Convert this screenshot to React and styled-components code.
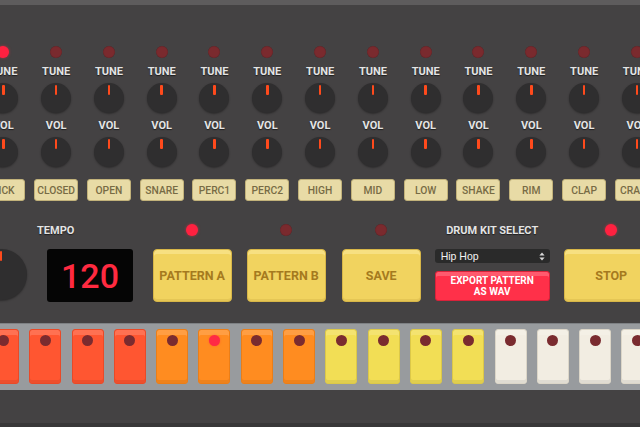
import React from 'react';
import styled, { createGlobalStyle } from 'styled-components';

const GlobalStyle = createGlobalStyle`
  html, body {
    margin: 0;
    padding: 0;
    background: #444243;
    overflow: hidden;
    font-family: Roboto, "Liberation Sans", Arial, sans-serif;
  }
`;

const Machine = styled.div`
  width: 640px;
  height: 427px;
  display: flex;
  flex-direction: column;
  background: #444243;
  overflow: hidden;
`;

const TopBar = styled.div`
  height: 5px;
  background: #5e5c5d;
  flex-shrink: 0;
`;

const ChannelRow = styled.div`
  display: flex;
  margin-left: -23.1px;
  padding-top: 40.7px;
`;

const Channel = styled.div`
  width: 52.8px;
  flex-shrink: 0;
  display: flex;
  flex-direction: column;
  align-items: center;
`;

const Led = styled.div`
  width: ${p => p.$size || 12}px;
  height: ${p => p.$size || 12}px;
  border-radius: 50%;
  background: ${p => (p.$on ? '#ff2140' : '#7a2a2e')};
  box-shadow: ${p => (p.$on ? '0 0 3px rgba(255,40,60,0.6)' : 'inset 0 0 1px rgba(0,0,0,0.4)')};
  flex-shrink: 0;
`;

const KnobLabel = styled.div`
  height: 13px;
  line-height: 13px;
  margin-top: ${p => p.$mt}px;
  font-size: 11px;
  font-weight: 700;
  color: #e4e4e4;
  text-shadow: 0 1px 1px #1e1e1e;
`;

const Knob = styled.div`
  position: relative;
  width: ${p => p.$size}px;
  height: ${p => p.$size}px;
  margin-top: ${p => p.$mt || 0}px;
  border-radius: 50%;
  background: #2f2e2f;
  box-shadow: 0 1px 2px rgba(0, 0, 0, 0.35);
  flex-shrink: 0;

  &::after {
    content: '';
    position: absolute;
    left: 50%;
    top: 2px;
    width: 2.5px;
    height: 10px;
    margin-left: -1.25px;
    background: #ff4a1c;
    border-radius: 1px;
  }
`;

const ChannelButton = styled.div`
  margin-top: 12px;
  width: 44px;
  height: 22px;
  box-sizing: border-box;
  display: flex;
  align-items: center;
  justify-content: center;
  background: #e8dba6;
  border: 1px solid #c2b27a;
  border-radius: 3px;
  font-size: 10.3px;
  font-weight: 500;
  color: #776b45;
  white-space: nowrap;
`;

const ControlRow = styled.div`
  display: flex;
  margin-top: 21px;
  margin-left: -24.5px;
`;

const Group = styled.div`
  display: flex;
  flex-direction: column;
  align-items: ${p => p.$align || 'center'};
  margin-left: ${p => p.$ml || 0}px;
  flex-shrink: 0;
`;

const Header = styled.div`
  height: 16px;
  display: flex;
  align-items: center;
  justify-content: center;
  padding-left: ${p => p.$pl || 0}px;
  margin-bottom: 11px;
  font-size: 11px;
  font-weight: 700;
  color: #e4e4e4;
  text-shadow: 0 1px 1px #1e1e1e;
  white-space: nowrap;
`;

const TempoBody = styled.div`
  display: flex;
  align-items: flex-start;
  gap: 20.5px;
`;

const Display = styled.div`
  width: 86px;
  height: 53px;
  background: #050505;
  border-radius: 3px;
  display: flex;
  align-items: center;
  justify-content: center;
  color: #ff2a40;
  font-size: 34px;
  font-weight: 500;
`;

const PadButton = styled.div`
  width: ${p => p.$w || 79}px;
  height: 53px;
  box-sizing: border-box;
  display: flex;
  align-items: center;
  justify-content: center;
  background: #f1d35f;
  border: 1px solid #d7b648;
  border-radius: 4px;
  box-shadow: inset 0 4px 0 rgba(255, 240, 170, 0.45), inset 0 -2px 0 rgba(150, 110, 20, 0.12);
  font-size: 12.5px;
  font-weight: 700;
  color: #a57a1e;
  white-space: nowrap;
`;

const KitColumn = styled.div`
  width: 115px;
  display: flex;
  flex-direction: column;
  gap: 7.5px;
`;

const Select = styled.div`
  height: 14px;
  box-sizing: border-box;
  padding: 0 5px 0 6px;
  display: flex;
  align-items: center;
  justify-content: space-between;
  background: #2a2a2a;
  border-radius: 3px;
  font-family: "Liberation Sans", Arial, sans-serif;
  font-size: 10.5px;
  color: #f2f2f2;
`;

const ExportButton = styled.div`
  height: 30px;
  box-sizing: border-box;
  display: flex;
  flex-direction: column;
  align-items: center;
  justify-content: center;
  background: #ff3049;
  border: 1px solid #d9223a;
  border-radius: 3px;
  box-shadow: inset 0 4px 0 rgba(255, 170, 180, 0.35);
  font-size: 10px;
  line-height: 11px;
  font-weight: 700;
  color: #ffffff;
  text-align: center;
`;

const SeqStrip = styled.div`
  margin-top: 20.7px;
  height: 67.3px;
  box-sizing: border-box;
  padding-top: 5.5px;
  background: #989b9e;
  border-top: 1px solid #7e8184;
  display: flex;
  gap: 10.3px;
  margin-left: -13px;
`;

const padColors = {
  red: { bg: '#ff5631', border: '#e94a28' },
  orange: { bg: '#ff8c20', border: '#ea7e18' },
  yellow: { bg: '#f2de55', border: '#dcc848' },
  cream: { bg: '#f2ede2', border: '#dcd6c8' },
};

const Step = styled.div`
  width: 32px;
  height: 55px;
  box-sizing: border-box;
  flex-shrink: 0;
  display: flex;
  justify-content: center;
  padding-top: 4.5px;
  border-radius: 3px;
  background: ${p => padColors[p.$color].bg};
  border: 1px solid ${p => padColors[p.$color].border};
  box-shadow: inset 0 5px 0 rgba(255, 255, 255, 0.16), inset 0 -3px 0 rgba(0, 0, 0, 0.07);
`;

const StepLed = styled(Led)`
  background: ${p => (p.$on ? '#ff2a45' : '#7a2b2f')};
  box-shadow: ${p => (p.$on ? '0 0 2px rgba(255,40,60,0.5)' : 'none')};
`;

const Footer = styled.div`
  flex: 1;
`;

const BottomEdge = styled.div`
  height: 4px;
  background: #383738;
`;

const channels = ['KICK', 'CLOSED', 'OPEN', 'SNARE', 'PERC1', 'PERC2', 'HIGH', 'MID', 'LOW', 'SHAKE', 'RIM', 'CLAP', 'CRASH'];

const steps = [
  'red', 'red', 'red', 'red',
  'orange', 'orange', 'orange', 'orange',
  'yellow', 'yellow', 'yellow', 'yellow',
  'cream', 'cream', 'cream', 'cream',
];

const SelectArrows = () => (
  <svg width="6" height="9" viewBox="0 0 6 9">
    <path d="M3 0.5 L5.6 3.6 L0.4 3.6 Z" fill="#d8d8d8" />
    <path d="M3 8.5 L5.6 5.4 L0.4 5.4 Z" fill="#d8d8d8" />
  </svg>
);

const App = () => {
  return (
    <Machine>
      <GlobalStyle />
      <TopBar />
      <ChannelRow>
        {channels.map((name, i) => (
          <Channel key={name}>
            <Led $on={i === 0} />
            <KnobLabel $mt={7}>TUNE</KnobLabel>
            <Knob $size={30} $mt={5.5} />
            <KnobLabel $mt={5.5}>VOL</KnobLabel>
            <Knob $size={30} $mt={5.5} />
            <ChannelButton>{name}</ChannelButton>
          </Channel>
        ))}
      </ChannelRow>

      <ControlRow>
        <Group $align="flex-start">
          <Header $pl={61.5}>TEMPO</Header>
          <TempoBody>
            <Knob $size={51} />
            <Display>120</Display>
          </TempoBody>
        </Group>
        <Group $ml={19.7}>
          <Header><Led $on /></Header>
          <PadButton>PATTERN A</PadButton>
        </Group>
        <Group $ml={15}>
          <Header><Led /></Header>
          <PadButton>PATTERN B</PadButton>
        </Group>
        <Group $ml={16}>
          <Header><Led /></Header>
          <PadButton>SAVE</PadButton>
        </Group>
        <Group $ml={14}>
          <Header>DRUM KIT SELECT</Header>
          <KitColumn>
            <Select>
              <span>Hip Hop</span>
              <SelectArrows />
            </Select>
            <ExportButton>
              <span>EXPORT PATTERN</span>
              <span>AS WAV</span>
            </ExportButton>
          </KitColumn>
        </Group>
        <Group $ml={14}>
          <Header><Led $on /></Header>
          <PadButton $w={95}>STOP</PadButton>
        </Group>
      </ControlRow>

      <SeqStrip>
        {steps.map((c, i) => (
          <Step key={i} $color={c}>
            <StepLed $size={11} $on={i === 5} />
          </Step>
        ))}
      </SeqStrip>
      <Footer />
      <BottomEdge />
    </Machine>
  );
};

export default App;
